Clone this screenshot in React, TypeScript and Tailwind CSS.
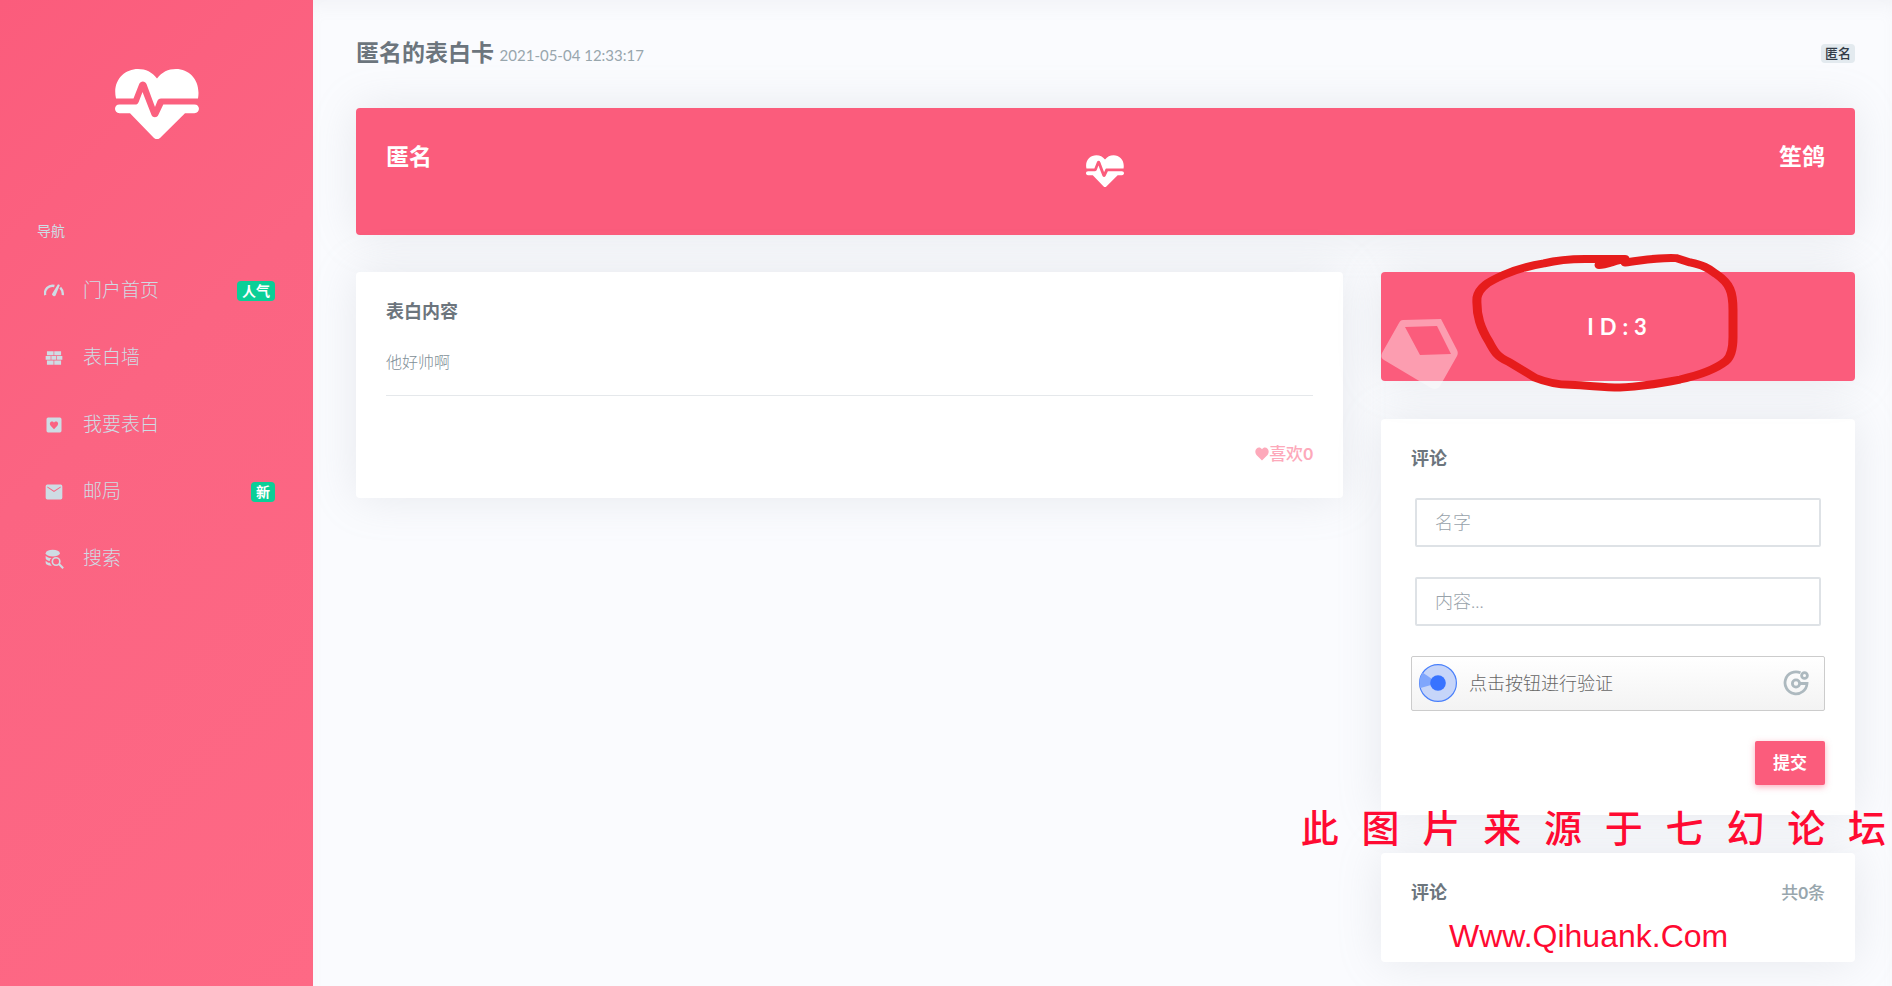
import type { ReactNode } from "react";

const NAV: { label: string; icon: ReactNode; badge?: string }[] = [
  {
    label: "门户首页",
    badge: "人气",
    icon: (
      <>
        <path d="M1.500 17a9 9 0 0 1 11-11M19.500 8a11 11 0 0 1 3 9" fill="none" stroke="currentColor" strokeWidth="2.800" />
        <path d="M16.800 4l2.200.9-4.600 11.300a2.300 2.300 0 1 1-4.100-1.800z" />
      </>
    ),
  },
  {
    label: "表白墙",
    icon: (
      <path d="M3.500 4h8v4.700h-8zM12.300 4h8.200v4.700h-8.200zM2 9.500h6v4.700H2zM8.800 9.500h6v4.700h-6zM15.600 9.500H22v4.700h-6.400zM3.500 15h8v5h-8zM12.300 15h8.200v5h-8.200z" />
    ),
  },
  {
    label: "我要表白",
    icon: (
      <path
        fillRule="evenodd"
        d="M5 3h14a2 2 0 0 1 2 2v14a2 2 0 0 1-2 2H5a2 2 0 0 1-2-2V5a2 2 0 0 1 2-2zm7 14 4-4.200c2.200-2.600.2-5-1.600-5-1.100 0-1.900.6-2.400 1.300-.5-.7-1.300-1.300-2.400-1.300-1.800 0-3.800 2.400-1.600 5z"
      />
    ),
  },
  {
    label: "邮局",
    badge: "新",
    icon: (
      <path
        fillRule="evenodd"
        d="M4 3h16a2 2 0 0 1 2 2v14a2 2 0 0 1-2 2H4a2 2 0 0 1-2-2V5a2 2 0 0 1 2-2zm0 3.500 8 5.500 8-5.500V5.300l-8 5.200-8-5.200z"
      />
    ),
  },
  {
    label: "搜索",
    icon: (
      <>
        <ellipse cx="10.500" cy="5" rx="8.500" ry="4" />
        <path d="M2 8c1.500 2 4 2.700 7 2.800-1.300 1-1.900 2.200-2 3.600C4.500 14 2 12.800 2 11zM2 14c1.200 1.500 3 2.300 5.200 2.600.4 1.500 1.200 2.600 2.300 3.500C5 20 2 18.500 2 16.500z" />
        <circle cx="14.500" cy="15" r="4.500" fill="none" stroke="currentColor" strokeWidth="2" />
        <path d="m18 18 5 5" stroke="currentColor" strokeWidth="2.500" />
      </>
    ),
  },
];

const CARD = "rounded bg-white shadow-[0_0_45px_rgba(154,161,171,0.2)]";
const PINK_CARD = "rounded bg-[#fb5c7c] shadow-[0_0_45px_rgba(154,161,171,0.2)]";
const FIELD =
  "mx-1 h-[49px] rounded-xs border-2 border-[#dee2e6] bg-white px-[18px] pb-0.5 text-lg font-light text-[#6c757d] placeholder:text-[#98a2aa] outline-none";

function HeartPulse({ className }: { className: string }) {
  return (
    <svg viewBox="0 0 84 70" className={className} fill="currentColor" aria-hidden="true">
      <path d="M1 29.500C-3 12 9 0 23 0c8 0 14 3 19 9.500C47 3 53 0 61 0c14 0 25 12 22 29.500H46c-2 0-3 1-3.600 2.500L40 38 31.500 15c-1.300-3.500-6-3.500-7.300 0L18.500 29.500z" />
      <path d="M4.500 35.500H20c2 0 3-1 3.700-2.600L27.500 23 36.500 46c1.300 3 5.500 3 6.800 0l5-10.500h31c6.200 0 6.200 8.700 0 8.700H70L45 69c-2 1.700-4 1.700-6 0L15 44.200H4.500c-6 0-6-8.700 0-8.700z" />
    </svg>
  );
}

function Sidebar() {
  return (
    <aside className="w-[313px] shrink-0 bg-linear-135 from-[#fb5c7c] via-[#fb6482] via-40% to-[#fe6985] text-[#cedce4]">
      <div className="flex justify-center pt-[69px] text-white">
        <HeartPulse className="h-[70px] w-[84px]" />
      </div>
      <p className="mt-[82px] px-[37px] text-sm leading-5">导航</p>
      <nav className="mt-4">
        {NAV.map((item) => (
          <a key={item.label} href="#" className="flex h-[67px] items-center pr-[38px] pl-11">
            <svg viewBox="0 0 24 24" className="size-5" fill="currentColor" aria-hidden="true">
              {item.icon}
            </svg>
            <span className="ml-[19px] text-[19px] font-light">{item.label}</span>
            {item.badge && (
              <span className="ml-auto rounded bg-[#0acf97] px-[5px] text-sm leading-5 font-bold text-white">
                {item.badge}
              </span>
            )}
          </a>
        ))}
      </nav>
    </aside>
  );
}

function IdCard() {
  return (
    <section className={`${PINK_CARD} relative flex h-[109px] items-center justify-center`}>
      <svg viewBox="0 0 78 72" className="absolute top-[47px] left-0 h-[72px] w-[78px]" aria-hidden="true">
        <path
          fill="#fff"
          fillOpacity="0.4"
          fillRule="evenodd"
          d="M22 1 60 0 76 31c1 2 1 4 0 6L59 67c-2 3-5 4-9 2L3 41c-3-2-3-4-2-7L18 4c1-2 2-3 4-3zM24 8 39 36 70 35 56 7z"
        />
      </svg>
      <p className="pl-1 text-[22px] font-bold tracking-[6px] text-white">ID:3</p>
      {/* hand-drawn marker ring */}
      <svg viewBox="0 0 274 152" className="absolute -top-7 left-[87px] h-[152px] w-[274px]" aria-hidden="true">
        <path
          d="M131 24C139 24 146 19 157 17H117C100 17 90 18 76 22 60 25 48 29 36 35 20 43 11 49 9 61 8 82 13 96 21 111 26 122 29 128 41 134L67 152C78 157 88 160 102 160 124 161 134 163 152 163 172 162 184 160 212 154 232 149 248 142 258 133 264 127 265 116 265 106V75C265 54 262 45 248 34 240 27 235 24 222 21L208 16C190 15 178 18 157 21"
          transform="scale(1 0.88)"
          fill="none"
          stroke="#e61c1c"
          strokeWidth="9"
          strokeLinecap="round"
          strokeLinejoin="round"
        />
      </svg>
    </section>
  );
}

function CommentForm() {
  return (
    <form className={`${CARD} flex flex-col gap-[30px] p-[30px]`} onSubmit={(e) => e.preventDefault()}>
      <h2 className="text-lg leading-[19px] font-bold">评论</h2>
      <input type="text" aria-label="名字" placeholder="名字" className={FIELD} />
      <input type="text" aria-label="内容" placeholder="内容..." className={FIELD} />
      <button
        type="button"
        className="flex h-[55px] items-center rounded-xs border border-[#ccc] bg-linear-to-b from-white to-[#f3f3f3] pr-[15px] pb-0.5 pl-[7px] text-lg text-[#666]"
      >
        <svg viewBox="0 0 38 38" className="size-[38px]" aria-hidden="true">
          <circle cx="19" cy="19" r="18.400" fill="#c6d5f9" stroke="#4a80fb" strokeWidth="1.200" />
          <path d="M19 19 3.500 8.500A18 18 0 0 0 1.500 24z" fill="#80a6fc" />
          <circle cx="19" cy="19" r="7.800" fill="#3873ff" />
        </svg>
        <span className="ml-3 font-light">点击按钮进行验证</span>
        <svg viewBox="0 0 26 26" className="ml-auto size-[26px]" fill="none" stroke="#adb9bf" strokeWidth="2.800" aria-hidden="true">
          <path d="M17.500 2.800A11 11 0 1 0 24 13.500h-7" />
          <circle cx="13" cy="13.500" r="3.600" />
          <circle cx="21.500" cy="5.500" r="2.900" />
        </svg>
      </button>
      <button
        type="submit"
        className="h-11 self-end rounded-xs bg-[#fb5c7c] px-[18px] text-[17px] font-bold text-white shadow-[0_2px_6px_rgba(250,92,124,0.5)]"
      >
        提交
      </button>
    </form>
  );
}

export default function App() {
  return (
    <div className="flex min-h-screen bg-[#fafbfe] font-[Lato,'Noto_Sans_CJK_SC',sans-serif] text-[#6c757d]">
      <Sidebar />
      <main className="min-w-0 flex-1 overflow-hidden pr-[37px] pb-6 pl-[43px] shadow-[inset_0_12px_18px_-8px_rgba(154,161,171,0.1)]">
        <header className="flex h-[108px] items-start justify-between pt-9">
          <h1 className="text-[23px] leading-8 font-bold">
            匿名的表白卡 <small className="text-[15px] font-normal text-[#98a6ad]">2021-05-04 12:33:17</small>
          </h1>
          <span className="mt-2 rounded bg-[#e3eaef] px-1 text-[13px] leading-[19px] font-medium text-[#313a46]">匿名</span>
        </header>

        <section className={`${PINK_CARD} grid h-[127px] grid-cols-3 p-[30px] text-[23px] leading-9 font-bold text-white`}>
          <h2>匿名</h2>
          <HeartPulse className="mt-[17px] h-8 w-[38px] justify-self-center" />
          <h2 className="text-right">笙鸽</h2>
        </section>

        <div className="mt-[37px] grid grid-cols-[987fr_474fr] items-start gap-[38px]">
          <section className={`${CARD} p-[30px]`}>
            <h2 className="text-lg leading-[19px] font-bold">表白内容</h2>
            <p className="mt-[29px] border-b border-[#e5e8eb] pb-[21px] text-base leading-6 font-light text-[#7f8f97]">他好帅啊</p>
            <button
              type="button"
              className="mt-[44px] ml-auto flex items-center text-[17px] leading-7 font-medium text-[#fda9ba]"
            >
              <svg viewBox="0 0 24 22" className="h-3.5 w-3.5" fill="currentColor" aria-hidden="true">
                <path d="M12 22 2.500 12.500C-4 4 7-5 12 3c5-8 16 1 9.500 9.500z" />
              </svg>
              喜欢<span className="font-bold">0</span>
            </button>
          </section>

          <div className="flex flex-col gap-[38px]">
            <IdCard />
            <CommentForm />
            <section className={`${CARD} relative h-[109px] p-[30px]`}>
              <div className="flex justify-between">
                <h2 className="text-lg leading-[19px] font-bold">评论</h2>
                <span className="text-[17px] leading-[19px] font-medium text-[#98a6ad]">
                  共<span className="font-bold">0</span>条
                </span>
              </div>
              <p className="absolute -top-[47px] -right-[31px] font-[Liberation_Mono,'Noto_Sans_CJK_SC',monospace] text-[38px] leading-[52px] font-medium whitespace-nowrap text-[#ff0a32]">
                此 图 片 来 源 于 七 幻 论 坛
              </p>
              <p className="absolute top-[57px] left-[68px] font-[Liberation_Sans,sans-serif] text-[32px] leading-[52px] text-[#ff0a32]">
                Www.Qihuank.Com
              </p>
            </section>
          </div>
        </div>
      </main>
    </div>
  );
}
